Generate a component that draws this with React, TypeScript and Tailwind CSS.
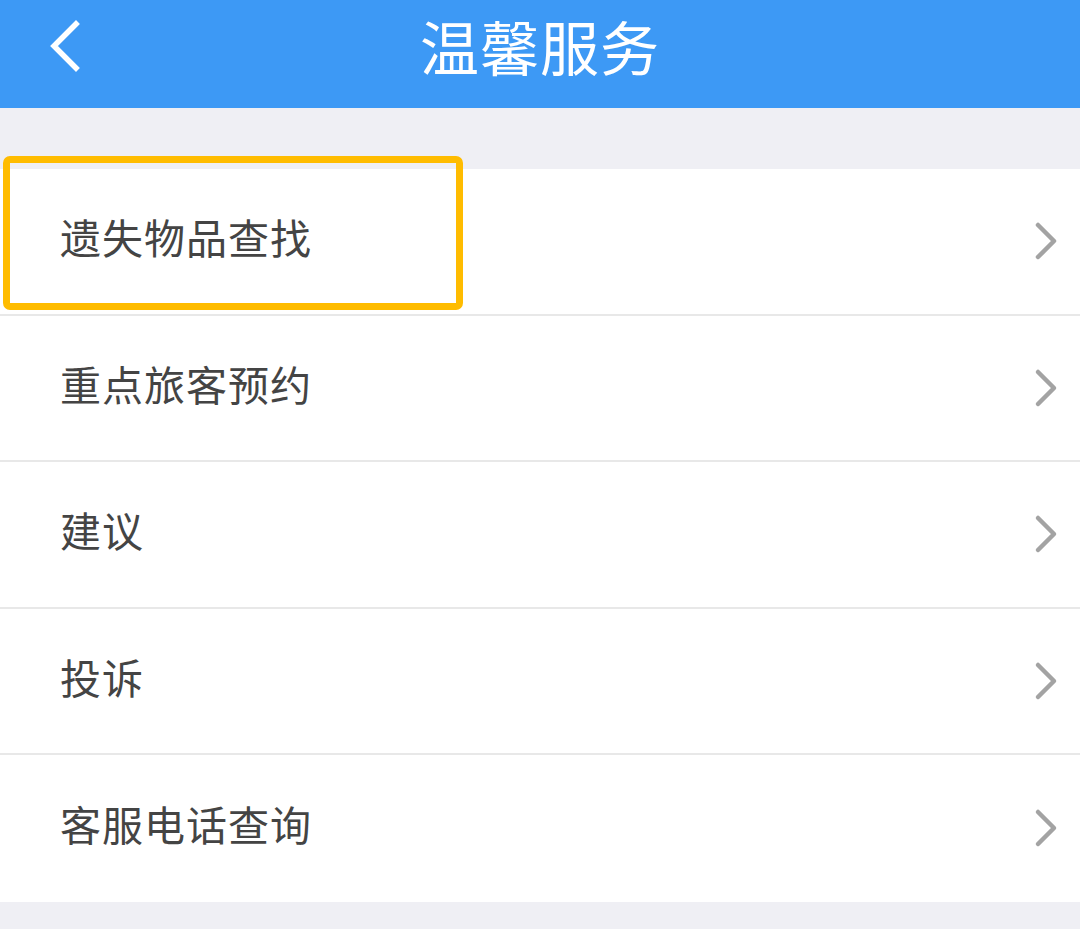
import React from 'react';

const items = ['遗失物品查找', '重点旅客预约', '建议', '投诉', '客服电话查询'];

const font = { fontFamily: '"Noto Sans CJK SC", "Noto Sans", sans-serif' };

const ChevronRight = () => (
  <svg width="28" height="40" viewBox="0 0 28 40" fill="none">
    <path d="M6 4 L22 20 L6 36" stroke="#a3a3a3" strokeWidth="4.5" strokeLinecap="round" strokeLinejoin="round" />
  </svg>
);

const App = () => {
  return (
    <div className="w-[1080px] h-[929px] bg-[#efeff4] relative overflow-hidden" style={font}>
      {/* Header */}
      <div className="h-[108px] bg-[#3d99f5] relative flex items-center justify-center">
        <button className="absolute left-[37px] top-[18px] w-[50px] h-[56px] flex items-center justify-center">
          <svg width="40" height="52" viewBox="0 0 40 52" fill="none">
            <path d="M34 4 L12 26 L34 48" stroke="#ffffff" strokeWidth="5.5" strokeLinecap="square" />
          </svg>
        </button>
        <h1 className="text-white text-[59px] leading-none tracking-[1px] -mt-[17px]">温馨服务</h1>
      </div>

      {/* List */}
      <div className="mt-[61px] bg-white">
        {items.map((label, i) => (
          <div
            key={label}
            className={`h-[146.5px] flex items-center justify-between pl-[60px] pr-[20px] ${i < items.length - 1 ? 'border-b-2 border-[#e8e8e8]' : ''}`}
          >
            <span className="text-[41px] text-[#444444] leading-none tracking-[1px] -mt-[9px]">{label}</span>
            <ChevronRight />
          </div>
        ))}
      </div>

      {/* Highlight */}
      <div className="absolute left-[3px] top-[156px] w-[460px] h-[154px] border-[7px] border-[#ffbc00] rounded-[7px]" />
    </div>
  );
};

export default App;
